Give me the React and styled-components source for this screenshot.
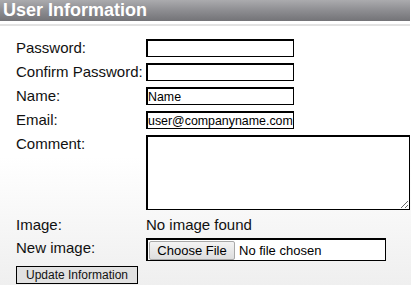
import React from 'react'
import styled, { createGlobalStyle } from 'styled-components'

const GlobalStyle = createGlobalStyle`
  html, body {
    margin: 0;
    padding: 0;
  }
  body {
    font-family: 'Liberation Sans', Arial, sans-serif;
    min-height: 100vh;
    background: linear-gradient(to bottom, #ffffff 0%, #ffffff 55%, #efefef 100%);
  }
`

const Panel = styled.div`
  width: 410px;
  min-height: 285px;
`

const Header = styled.h2`
  margin: 0;
  height: 21px;
  padding-left: 3px;
  background: linear-gradient(to bottom, #ababae 0%, #8d8d91 50%, #737377 100%);
  color: #fff;
  font-size: 18px;
  font-weight: bold;
  line-height: 20px;
`

const Divider = styled.div`
  margin-top: 3px;
  height: 2px;
  background: #e2e2e2;
`

const Form = styled.form`
  display: grid;
  grid-template-columns: 130px 1fr;
  row-gap: 6px;
  padding: 13px 0 0 16px;
  font-size: 15px;
  color: #111;
`

const Label = styled.label`
  line-height: 18px;
  white-space: nowrap;
`

const Field = styled.input`
  box-sizing: border-box;
  width: 148px;
  height: 18px;
  margin: 0;
  padding: 0;
  border: 1px solid #000;
  border-width: 2px 1px 1px 2px;
  font-family: 'Liberation Sans', Arial, sans-serif;
  font-size: 12.4px;
  color: #000;
  background: #fff;
  outline: none;
`

const Comment = styled.textarea`
  box-sizing: border-box;
  width: 264px;
  height: 75px;
  margin: 0;
  border: 1px solid #000;
  border-width: 2px 1px 1px 2px;
  font-family: 'Liberation Sans', Arial, sans-serif;
  font-size: 13px;
  background: #fff;
  resize: both;
`

const Value = styled.span`
  line-height: 17px;
`

const FileBox = styled.div`
  box-sizing: border-box;
  display: flex;
  align-items: center;
  width: 240px;
  height: 23px;
  margin-top: -1px;
  padding: 1px;
  border: 1px solid #000;
  border-width: 2px 1px 1px 2px;
  font-size: 13px;
  background: #fff;
`

const ChooseButton = styled.span`
  box-sizing: border-box;
  height: 19px;
  width: 86px;
  display: flex;
  align-items: center;
  justify-content: center;
  border: 1px solid #a9a9a9;
  border-radius: 2px;
  background: linear-gradient(to bottom, #f3f3f3, #dedede);
  color: #000;
`

const FileStatus = styled.span`
  margin-left: 4px;
  color: #000;
`

const Submit = styled.button`
  grid-column: 1 / span 2;
  justify-self: start;
  box-sizing: border-box;
  height: 18px;
  width: 122px;
  margin: -1px 0 0;
  padding: 0;
  border: 1px solid #000;
  background: #e1e1e1;
  font-family: 'Liberation Sans', Arial, sans-serif;
  font-size: 12px;
  color: #111;
`

export default function App() {
  return (
    <Panel>
      <GlobalStyle />
      <Header>User Information</Header>
      <Divider />
      <Form onSubmit={(e) => e.preventDefault()}>
        <Label>Password:</Label>
        <Field type="password" />
        <Label>Confirm Password:</Label>
        <Field type="password" />
        <Label>Name:</Label>
        <Field type="text" defaultValue="Name" />
        <Label>Email:</Label>
        <Field type="text" defaultValue="user@companyname.com" />
        <Label>Comment:</Label>
        <Comment />
        <Value>Image:</Value>
        <Value>No image found</Value>
        <Label>New image:</Label>
        <FileBox>
          <ChooseButton>Choose File</ChooseButton>
          <FileStatus>No file chosen</FileStatus>
        </FileBox>
        <Submit type="submit">Update Information</Submit>
      </Form>
    </Panel>
  )
}
